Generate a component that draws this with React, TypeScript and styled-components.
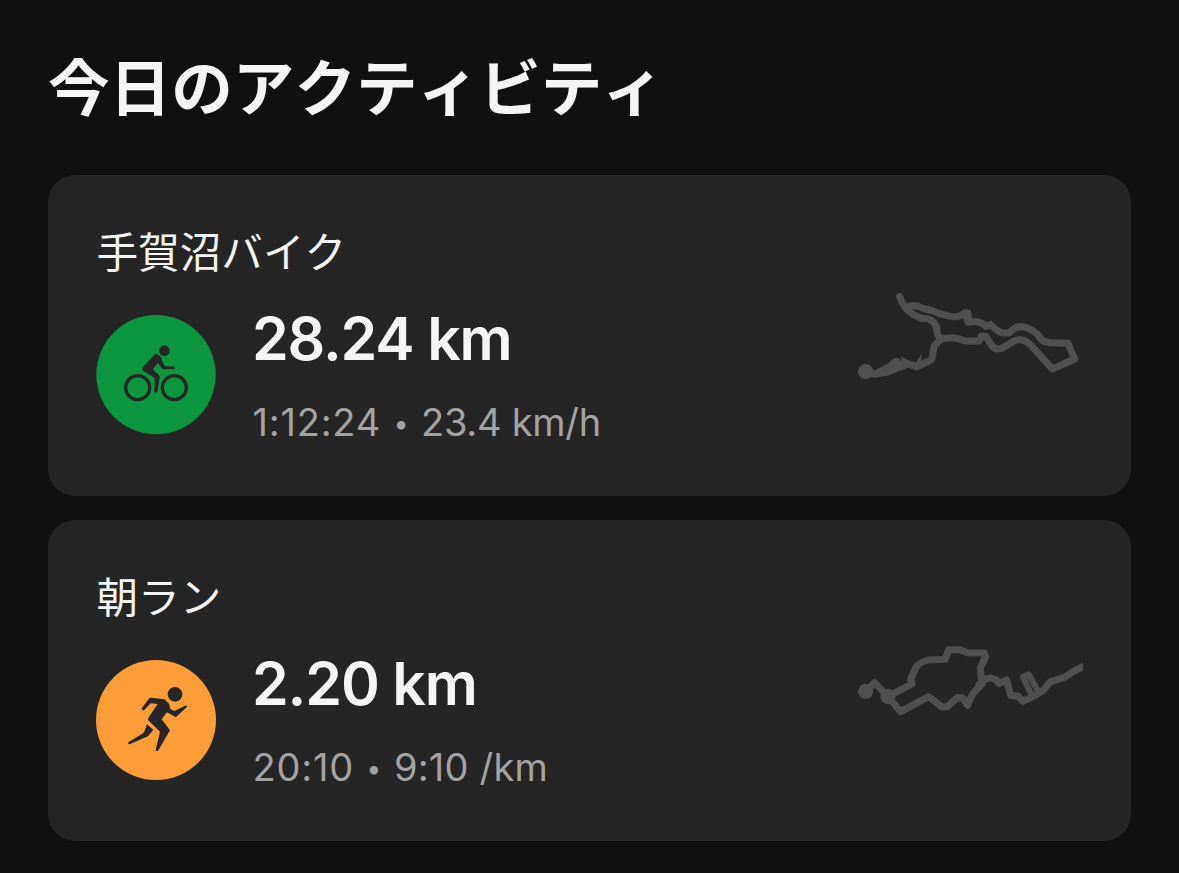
import React from "react";
import styled, { createGlobalStyle } from "styled-components";

const GlobalStyle = createGlobalStyle`
  body {
    margin: 0;
    background: #101010;
    color: #f5f5f5;
    font-family: Inter, "Noto Sans CJK JP", sans-serif;
  }
`;

const Page = styled.main`
  box-sizing: border-box;
  min-height: 873px;
  padding: 49px 48px 32px;
`;

const Heading = styled.h1`
  margin: 0 0 46px;
  height: 80px;
  line-height: 80px;
  font-size: 61.6px;
  font-weight: 700;
  font-kerning: none;
  white-space: nowrap;
`;

const CardList = styled.div`
  display: flex;
  flex-direction: column;
  gap: 24px;
`;

const Card = styled.article`
  box-sizing: border-box;
  display: flex;
  align-items: center;
  justify-content: space-between;
  height: 321px;
  padding: 0 48px;
  border-radius: 27px;
  background: #252525;
`;

const Details = styled.div`
  display: flex;
  flex-direction: column;
  align-self: flex-start;
  padding-top: 50px;
`;

const ActivityName = styled.h2`
  margin: 0;
  padding-left: 0.5px;
  height: 56px;
  line-height: 56px;
  font-size: 41.6px;
  font-weight: 400;
  font-kerning: none;
  white-space: nowrap;
`;

const Summary = styled.div`
  display: flex;
  gap: 36px;
  margin-top: 34px;
`;

const Badge = styled.svg`
  width: 120px;
  height: 120px;
  flex: none;
`;

const Stats = styled.div`
  display: flex;
  flex-direction: column;
  white-space: nowrap;
`;

const Distance = styled.div`
  margin-top: -12px;
  height: 72px;
  line-height: 72px;
  font-size: 59px;
  font-weight: 600;
  letter-spacing: -1.15px;
`;

const Meta = styled.div`
  display: flex;
  margin-top: 23px;
  padding-left: 0.6px;
  height: 48px;
  line-height: 48px;
  font-size: 38px;
  color: #a3a3a3;
`;

const Figure = styled.span<{ $tracking: number }>`
  letter-spacing: ${(p) => p.$tracking}px;
`;

const Bullet = styled.span`
  width: 40px;
  line-height: 51px;
  font-size: 27px;
  text-align: center;
`;

const RouteMap = styled.svg<{ $height: number }>`
  width: 233px;
  height: ${(p) => p.$height}px;
  margin-bottom: 1px;
  flex: none;
  fill: none;
  stroke: #505050;
  stroke-width: 21;
  stroke-linejoin: round;
  stroke-linecap: round;
`;

const BikeBadge = () => (
  <Badge viewBox="18 15 360 360">
    <circle cx="198" cy="194" r="179" fill="#0c9640" />
    <g fill="#262626">
      <circle cx="223" cy="122" r="16" />
      <path d="M194 133Q198 129 203 133L213 142Q217 146 215 150L225 168L253 170Q258 174 254 177L220 178Q216 177 214 173L204 158L188 178L206 194Q210 198 209 203L203 244Q201 249 193 248L194 207Q193 203 189 201L159 182Q154 177 158 172Z" />
    </g>
    <g fill="none" stroke="#262626" strokeWidth="10">
      <circle cx="143" cy="233" r="36" />
      <circle cx="253" cy="233" r="36" />
    </g>
  </Badge>
);

const RunBadge = () => (
  <Badge viewBox="18 15 360 360">
    <circle cx="198" cy="195" r="180" fill="#fd9d38" />
    <g fill="#262626">
      <circle cx="255" cy="118" r="22" />
      <path d="M182 128L224 133L237 146L241 162L253 168L284 153Q289 149 291 154L290 157L257 187L231 172L215 193L240 226L205 286Q203 290 197 287L199 276L210 230L174 195L176 187L203 147L182 145L163 165Q159 168 155 163V160L178 130Z" />
      <path d="M171 208L190 224L174 244L120 267Q116 269 114 264L116 261L156 237L163 230Z" />
    </g>
  </Badge>
);

const BikeRoute = () => (
  <RouteMap $height={110} viewBox="0 0 699 330">
    <circle cx="47" cy="275" r="23" fill="#505050" stroke="none" />
    <path d="M149 50Q154 67 168 85Q190 69 217 84Q245 90 266 100L301 109Q329 115 344 98L354 99L356 127Q390 119 407 139L422 134Q440 153 457 159L479 158Q498 134 527 142Q546 149 563 163L578 183L600 188L654 190L674 237L607 267L555 209Q522 168 492 183L462 201Q443 214 427 199L408 170L395 168L387 183H346Q310 166 272 178L253 198L245 238L201 261L172 250L110 276L74 283L48 275" />
    <path d="M168 85Q185 105 218 116Q244 113 258 137L263 164L272 178" />
    <path d="M76 281L126 256" strokeWidth="20" />
    <g fill="#505050" stroke="none">
      <path d="M122 243Q133 228 149 236L157 246L153 229L178 243L198 248L216 220L212 247L232 241L204 271L174 263L110 287L100 274Z" />
      <path d="M414 132L424 121L434 134ZM337 96L348 89L363 95V125L350 136L340 121Z" />
    </g>
  </RouteMap>
);

const RunRoute = () => (
  <RouteMap $height={90} viewBox="0 0 699 270">
    <g fill="#505050" stroke="none">
      <circle cx="47" cy="169" r="23" />
      <circle cx="114" cy="184" r="23" />
    </g>
    <path d="M47 169L74 143L114 184L186 147L182 132L197 99Q204 84 234 75L286 73L296 44H330L352 53L402 54L407 65L391 98L396 147L376 167Q364 180 353 211L338 189L323 187L292 215H275L236 185L152 230L114 184" />
    <path d="M387 149Q400 132 422 128L438 134L448 145L470 135L482 181L504 184L519 199L560 179L582 164L601 140L642 128L669 110L703 93" />
    <path d="M546 182L519 126L536 118L565 170" strokeWidth="18" />
  </RouteMap>
);

interface ActivityProps {
  name: string;
  distance: string;
  duration: string;
  rate: string;
  rateTracking: number;
  badge: React.ReactNode;
  route: React.ReactNode;
}

const Activity = ({
  name,
  distance,
  duration,
  rate,
  rateTracking,
  badge,
  route,
}: ActivityProps) => (
  <Card>
    <Details>
      <ActivityName>{name}</ActivityName>
      <Summary>
        {badge}
        <Stats>
          <Distance>{distance}</Distance>
          <Meta>
            <Figure $tracking={0.75}>{duration}</Figure>
            <Bullet>•</Bullet>
            <Figure $tracking={rateTracking}>{rate}</Figure>
          </Meta>
        </Stats>
      </Summary>
    </Details>
    {route}
  </Card>
);

export default function App() {
  return (
    <>
      <GlobalStyle />
      <Page lang="ja">
        <Heading>今日のアクティビティ</Heading>
        <CardList>
          <Activity
            name="手賀沼バイク"
            distance="28.24 km"
            duration="1:12:24"
            rate="23.4 km/h"
            rateTracking={-0.25}
            badge={<BikeBadge />}
            route={<BikeRoute />}
          />
          <Activity
            name="朝ラン"
            distance="2.20 km"
            duration="20:10"
            rate="9:10 /km"
            rateTracking={0.2}
            badge={<RunBadge />}
            route={<RunRoute />}
          />
        </CardList>
      </Page>
    </>
  );
}
